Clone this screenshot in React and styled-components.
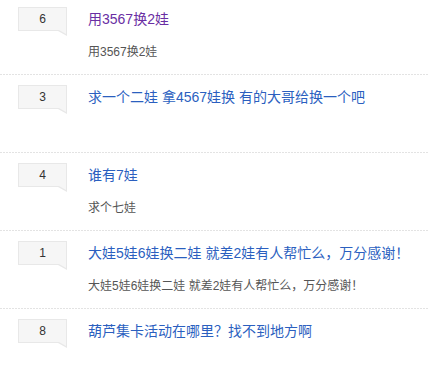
import styled, { createGlobalStyle } from 'styled-components';

const GlobalStyle = createGlobalStyle`
  html, body {
    margin: 0;
    padding: 0;
    background: #ffffff;
  }
  body {
    font-family: "Liberation Sans", "Noto Sans CJK SC", sans-serif;
  }
`;

const posts = [
  { id: 1, replies: 6, title: '用3567换2娃', summary: '用3567换2娃', visited: true },
  { id: 2, replies: 3, title: '求一个二娃 拿4567娃换 有的大哥给换一个吧', summary: '' },
  { id: 3, replies: 4, title: '谁有7娃', summary: '求个七娃' },
  {
    id: 4,
    replies: 1,
    title: '大娃5娃6娃换二娃 就差2娃有人帮忙么，万分感谢！',
    summary: '大娃5娃6娃换二娃 就差2娃有人帮忙么，万分感谢！',
  },
  { id: 5, replies: 8, title: '葫芦集卡活动在哪里？找不到地方啊', summary: '' },
];

const App = () => {
  return (
    <>
      <GlobalStyle />
      <List>
        {posts.map((post) => (
          <Row key={post.id}>
            <ReplyCount>{post.replies}</ReplyCount>
            <Content>
              <Title $visited={post.visited}>{post.title}</Title>
              {post.summary && <Summary>{post.summary}</Summary>}
            </Content>
          </Row>
        ))}
      </List>
    </>
  );
};

export default App;

const List = styled.div`
  margin-top: -3px;
  width: 100%;
`;

const Row = styled.div`
  display: flex;
  align-items: flex-start;
  box-sizing: border-box;
  height: 78px;
  padding: 10px 0 0 18px;
  background-image: repeating-linear-gradient(to right, #e3e3e3 0 2px, transparent 2px 3px);
  background-size: 100% 1px;
  background-repeat: no-repeat;
  background-position: left bottom;
`;

const ReplyCount = styled.div`
  position: relative;
  flex-shrink: 0;
  box-sizing: border-box;
  width: 49px;
  height: 24px;
  line-height: 22px;
  text-align: center;
  font-size: 12px;
  color: #333;
  background: #f6f6f6;
  border: 1px solid #e8e8e8;
  &::before {
    content: '';
    position: absolute;
    right: -1px;
    bottom: -6px;
    width: 0;
    height: 0;
    border-top: 5px solid #e8e8e8;
    border-left: 9px solid transparent;
  }
  &::after {
    content: '';
    position: absolute;
    right: 0;
    bottom: -4px;
    width: 0;
    height: 0;
    border-top: 4px solid #f6f6f6;
    border-left: 7px solid transparent;
  }
`;

const Content = styled.div`
  margin-left: 21px;
  min-width: 0;
`;

const Title = styled.a`
  display: block;
  font-size: 14px;
  line-height: 24px;
  color: ${(props) => (props.$visited ? '#6a2ea3' : '#2b5fbf')};
  text-decoration: none;
  white-space: nowrap;
  cursor: pointer;
`;

const Summary = styled.div`
  margin-top: 11px;
  font-size: 12px;
  line-height: 20px;
  color: #555;
  white-space: nowrap;
`;
